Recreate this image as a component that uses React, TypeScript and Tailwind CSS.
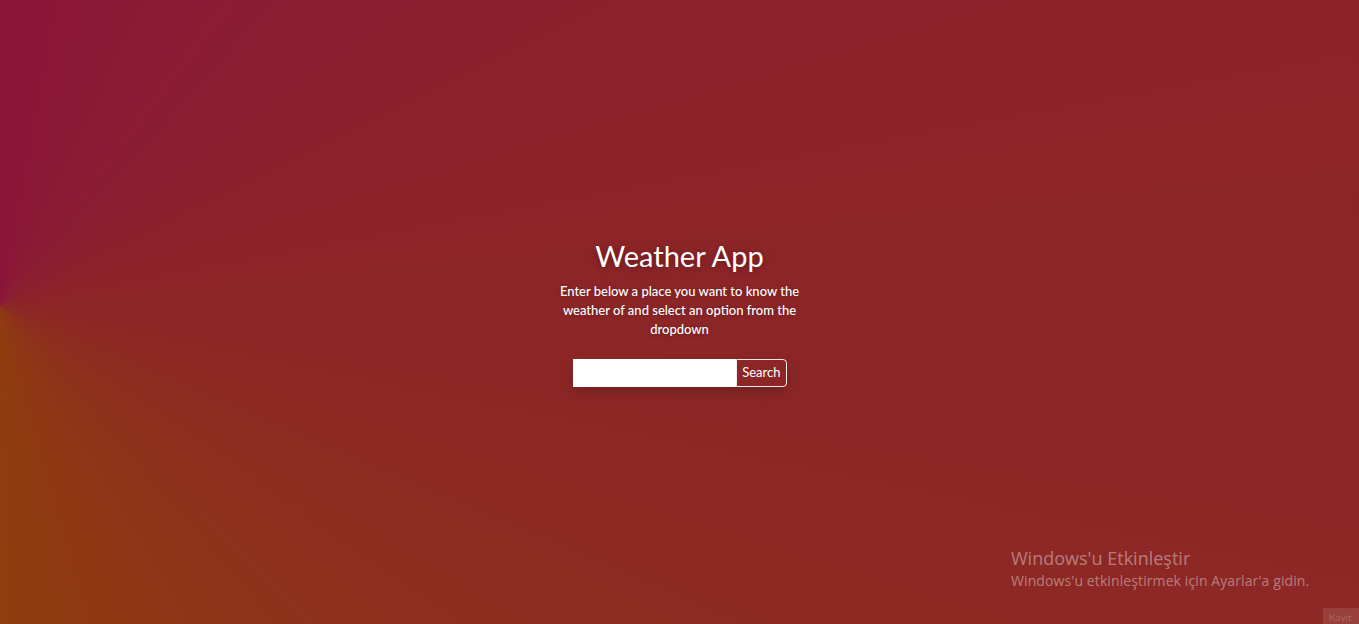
import { useState } from "react";

export default function App() {
  const [place, setPlace] = useState("");

  return (
    <div className="relative flex h-[624px] w-full items-center justify-center overflow-hidden bg-[conic-gradient(from_0deg_at_0%_49%,#8b1339_0deg,#8b1c34_35deg,#8c2329_75deg,#8c2726_100deg,#8d2f1e_125deg,#8e3715_155deg,#8f3d0f_180deg)] font-['Lato','Noto_Sans',sans-serif] text-white">
      <div className="flex w-[250px] flex-col items-center text-center">
        <h1 className="text-[29px] leading-[36px] font-normal [text-shadow:0_1px_6px_rgba(0,0,0,0.35)]">
          Weather App
        </h1>
        <p className="mt-[8px] text-[13px] leading-[19px] font-medium [text-shadow:0_1px_4px_rgba(0,0,0,0.25)]">
          Enter below a place you want to know the weather of and select an option from the dropdown
        </p>
        <form
          onSubmit={(event) => event.preventDefault()}
          className="mt-[20px] flex h-[28px] w-[214px] shadow-[0_6px_14px_rgba(0,0,0,0.18)]"
        >
          <input
            value={place}
            onChange={(event) => setPlace(event.target.value)}
            className="min-w-0 flex-1 bg-white px-2 text-[13px] text-gray-900 outline-none"
          />
          <button
            type="submit"
            className="rounded-r-[4px] border border-white/90 px-[5px] text-[13px] leading-none text-white"
          >
            Search
          </button>
        </form>
      </div>

      <div className="pointer-events-none absolute top-[545px] left-[1011px] font-['Open_Sans','Noto_Sans',sans-serif] text-white/40">
        <p className="text-[18px] leading-[26px]">Windows'u Etkinleştir</p>
        <p className="text-[14px] leading-[20px] tracking-[0.1px]">Windows'u etkinleştirmek için Ayarlar'a gidin.</p>
      </div>
      <div className="absolute top-[608px] left-[1323px] h-[16px] w-[36px] bg-white/10 pl-[6px] pt-[4px] text-[10px] leading-none text-white/20">
        Kayıt
      </div>
    </div>
  );
}
